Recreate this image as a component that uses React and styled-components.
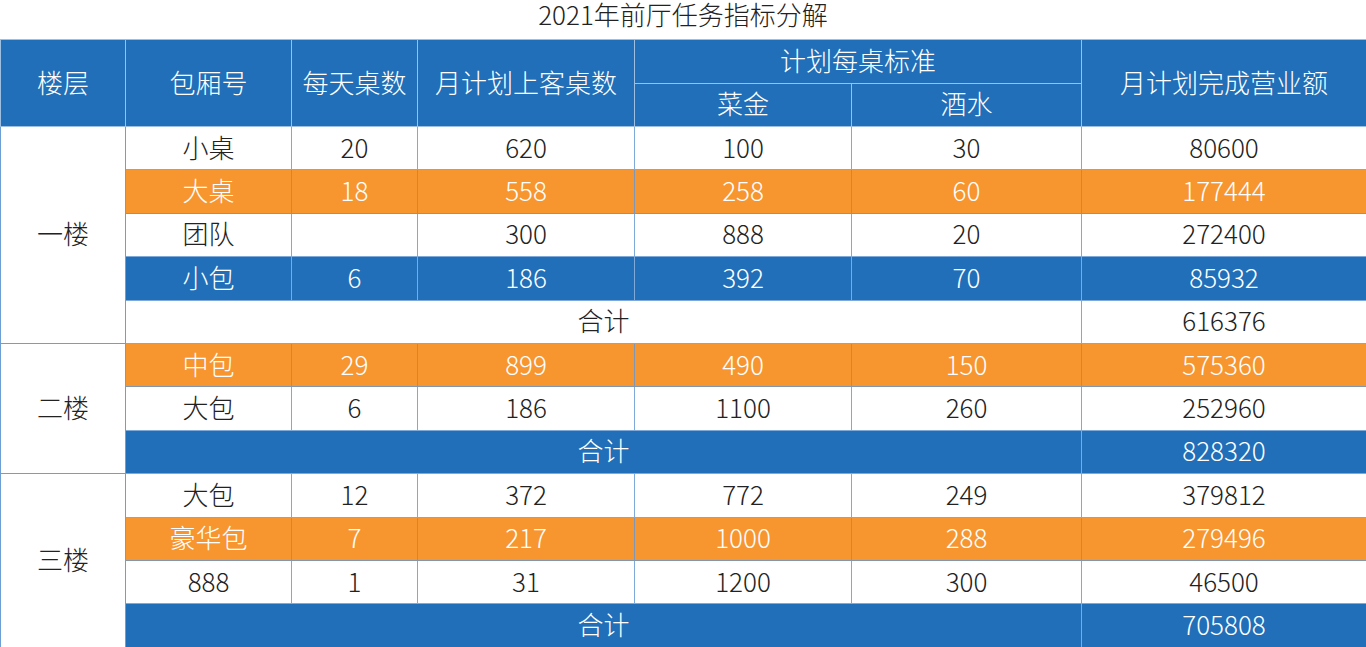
import styled, { createGlobalStyle } from "styled-components";

const GlobalStyle = createGlobalStyle`
  body {
    margin: 0;
    background: #ffffff;
    font-family: "Noto Sans CJK SC", "Noto Sans", sans-serif;
  }
`;

const BLUE = "#206fb8";
const ORANGE = "#f7952f";

const floors = [
  {
    name: "一楼",
    rows: [
      { room: "小桌", daily: "20", month: "620", food: "100", drink: "30", total: "80600", tone: "white" },
      { room: "大桌", daily: "18", month: "558", food: "258", drink: "60", total: "177444", tone: "orange" },
      { room: "团队", daily: "", month: "300", food: "888", drink: "20", total: "272400", tone: "white" },
      { room: "小包", daily: "6", month: "186", food: "392", drink: "70", total: "85932", tone: "blue" },
    ],
    sum: "616376",
    sumTone: "white",
  },
  {
    name: "二楼",
    rows: [
      { room: "中包", daily: "29", month: "899", food: "490", drink: "150", total: "575360", tone: "orange" },
      { room: "大包", daily: "6", month: "186", food: "1100", drink: "260", total: "252960", tone: "white" },
    ],
    sum: "828320",
    sumTone: "blue",
  },
  {
    name: "三楼",
    rows: [
      { room: "大包", daily: "12", month: "372", food: "772", drink: "249", total: "379812", tone: "white" },
      { room: "豪华包", daily: "7", month: "217", food: "1000", drink: "288", total: "279496", tone: "orange" },
      { room: "888", daily: "1", month: "31", food: "1200", drink: "300", total: "46500", tone: "white" },
    ],
    sum: "705808",
    sumTone: "blue",
  },
];

const Page = styled.div`
  width: 1366px;
`;

const Title = styled.div`
  height: 39px;
  line-height: 27px;
  text-align: center;
  font-size: 26px;
  font-weight: 300;
  color: #222;
`;

const Table = styled.table`
  width: 1366px;
  table-layout: fixed;
  border-collapse: collapse;
`;

const HeadCell = styled.th`
  background: ${BLUE};
  color: #fff;
  font-weight: 300;
  font-size: 26px;
  line-height: 1;
  height: 39.5px;
  padding: 0 0 3px;
  border: 1px solid #9dbfe2;
  text-align: center;
`;

const Row = styled.tr`
  height: 43.4px;
  background: ${(p) => (p.$tone === "orange" ? ORANGE : p.$tone === "blue" ? BLUE : "#fff")};
  color: ${(p) => (p.$tone === "white" ? "#222" : "#fff")};
`;

const Cell = styled.td`
  padding: 0 0 3px;
  font-size: 26px;
  font-weight: 300;
  text-align: center;
  border: 1px solid ${(p) => (p.$tone === "orange" ? "#7f96b4" : "#7fa9d8")};
  line-height: 1;
`;

const FloorCell = styled(Cell)`
  background: #fff;
  color: #222;
  border-color: #6f9ed3;
`;

export default function App() {
  return (
    <Page>
      <GlobalStyle />
      <Title>2021年前厅任务指标分解</Title>
      <Table>
        <colgroup>
          <col style={{ width: 125 }} />
          <col style={{ width: 166 }} />
          <col style={{ width: 126 }} />
          <col style={{ width: 217 }} />
          <col style={{ width: 217 }} />
          <col style={{ width: 230 }} />
          <col style={{ width: 285 }} />
        </colgroup>
        <thead>
          <tr>
            <HeadCell rowSpan={2}>楼层</HeadCell>
            <HeadCell rowSpan={2}>包厢号</HeadCell>
            <HeadCell rowSpan={2}>每天桌数</HeadCell>
            <HeadCell rowSpan={2}>月计划上客桌数</HeadCell>
            <HeadCell colSpan={2}>计划每桌标准</HeadCell>
            <HeadCell rowSpan={2}>月计划完成营业额</HeadCell>
          </tr>
          <tr>
            <HeadCell>菜金</HeadCell>
            <HeadCell>酒水</HeadCell>
          </tr>
        </thead>
        <tbody>
          {floors.map((f) => [
            ...f.rows.map((r, i) => (
              <Row key={f.name + i} $tone={r.tone}>
                {i === 0 && <FloorCell rowSpan={f.rows.length + 1}>{f.name}</FloorCell>}
                <Cell $tone={r.tone}>{r.room}</Cell>
                <Cell $tone={r.tone}>{r.daily}</Cell>
                <Cell $tone={r.tone}>{r.month}</Cell>
                <Cell $tone={r.tone}>{r.food}</Cell>
                <Cell $tone={r.tone}>{r.drink}</Cell>
                <Cell $tone={r.tone}>{r.total}</Cell>
              </Row>
            )),
            <Row key={f.name + "sum"} $tone={f.sumTone}>
              <Cell colSpan={5} $tone={f.sumTone}>合计</Cell>
              <Cell $tone={f.sumTone}>{f.sum}</Cell>
            </Row>,
          ])}
        </tbody>
      </Table>
    </Page>
  );
}
